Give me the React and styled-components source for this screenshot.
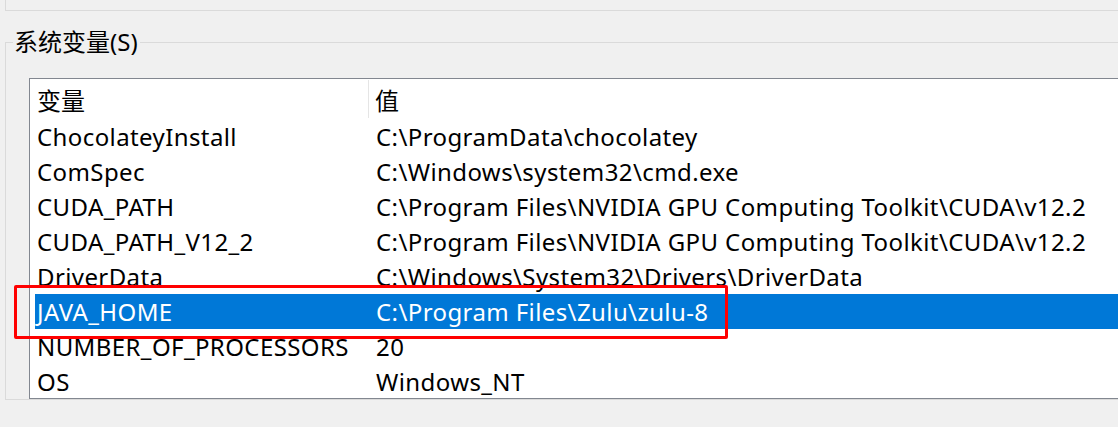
import styled, { createGlobalStyle } from "styled-components";

const GlobalStyle = createGlobalStyle`
  body {
    margin: 0;
    background: #f0f0f0;
    font-family: "Noto Sans", "Noto Sans CJK SC", sans-serif;
  }
`;

const rows = [
  ["ChocolateyInstall", "C:\\ProgramData\\chocolatey"],
  ["ComSpec", "C:\\Windows\\system32\\cmd.exe"],
  ["CUDA_PATH", "C:\\Program Files\\NVIDIA GPU Computing Toolkit\\CUDA\\v12.2"],
  ["CUDA_PATH_V12_2", "C:\\Program Files\\NVIDIA GPU Computing Toolkit\\CUDA\\v12.2"],
  ["DriverData", "C:\\Windows\\System32\\Drivers\\DriverData"],
  ["JAVA_HOME", "C:\\Program Files\\Zulu\\zulu-8"],
  ["NUMBER_OF_PROCESSORS", "20"],
  ["OS", "Windows_NT"],
];

const App = () => {
  return (
    <Page>
      <GlobalStyle />
      <UpperGroup />
      <Group>
        <Legend>系统变量(S)</Legend>
        <ListBox>
          <HeaderRow>
            <HeadCell>变量</HeadCell>
            <HeadCell $last>值</HeadCell>
          </HeaderRow>
          {rows.map(([name, value]) => (
            <Row key={name} $selected={name === "JAVA_HOME"}>
              <NameCell>{name}</NameCell>
              <ValueCell>{value}</ValueCell>
            </Row>
          ))}
        </ListBox>
      </Group>
      <Highlight />
    </Page>
  );
};

export default App;

const Page = styled.div`
  position: relative;
  width: 1118px;
  height: 427px;
  overflow: hidden;
`;

const UpperGroup = styled.div`
  height: 11px;
  margin-left: 5px;
  width: 1200px;
  box-sizing: border-box;
  border-left: 1px solid #dadada;
  border-bottom: 1px solid #dadada;
`;

const Group = styled.fieldset`
  margin: 19px 0 0 5px;
  width: 1200px;
  padding: 0 0 0 23px;
  border: 1px solid #dadada;
  border-right: none;
  min-inline-size: 0;
`;

const Legend = styled.legend`
  margin-left: -16px;
  padding: 0 2px 0 1px;
  font-size: 24px;
  line-height: 24px;
  color: #000;
`;

const ListBox = styled.div`
  margin-top: 24px;
  height: 321px;
  box-sizing: border-box;
  border: 1px solid #828790;
  background: #fff;
  overflow: hidden;
`;

const HeaderRow = styled.div`
  display: flex;
  height: 40px;
  padding-left: 5px;
  align-items: stretch;
`;

const HeadCell = styled.div`
  display: flex;
  align-items: center;
  box-sizing: border-box;
  width: ${(p) => (p.$last ? "auto" : "334px")};
  flex: ${(p) => (p.$last ? "1" : "none")};
  padding-left: ${(p) => (p.$last ? "6px" : "2px")};
  margin: 1px 0 1px;
  border-right: ${(p) => (p.$last ? "none" : "1px solid #e5e5e5")};
  font-size: 24px;
  color: #000;
`;

const Row = styled.div`
  display: flex;
  align-items: center;
  height: 35px;
  margin-left: 5px;
  background: ${(p) => (p.$selected ? "#0078d7" : "transparent")};
  color: ${(p) => (p.$selected ? "#fff" : "#000")};
  font-size: 24px;
  letter-spacing: 0.4px;
  white-space: nowrap;
`;

const NameCell = styled.div`
  width: 339px;
  box-sizing: border-box;
  padding-left: 2px;
`;

const ValueCell = styled.div`
  flex: 1;
  padding-left: 2px;
`;

const Highlight = styled.div`
  position: absolute;
  left: 14px;
  top: 285px;
  width: 714px;
  height: 54px;
  box-sizing: border-box;
  border: 3px solid #f00;
  border-radius: 2px;
  pointer-events: none;
`;
